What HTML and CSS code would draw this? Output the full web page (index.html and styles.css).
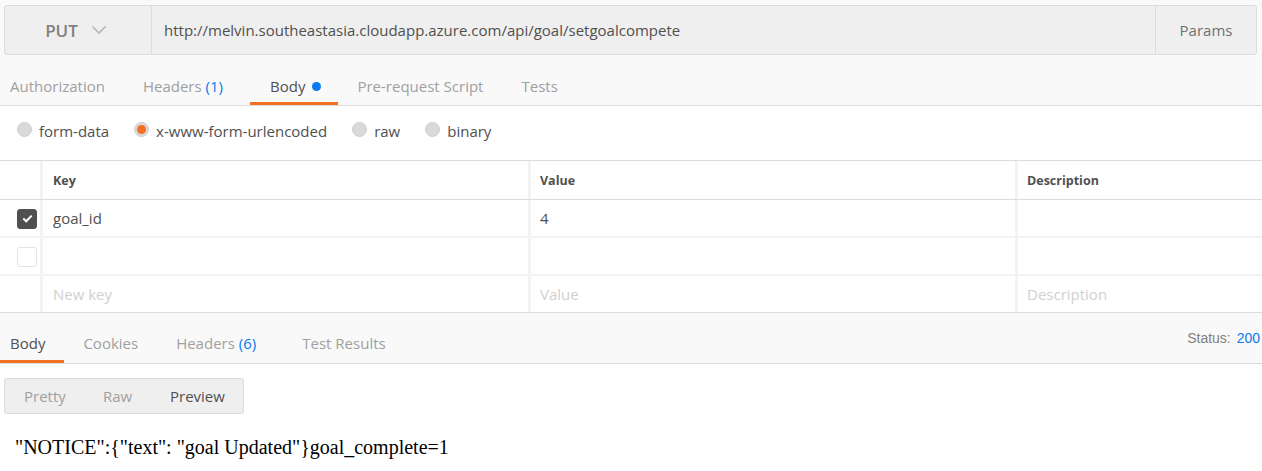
FILE: index.html
```html
<!DOCTYPE html>
<html>
<head>
<meta charset="utf-8">
<link rel="stylesheet" href="styles.css">
</head>
<body>
<div class="app">
  <div class="urlbar">
    <div class="method">
      <span class="method-name">PUT</span>
      <svg class="chev" width="16" height="10" viewBox="0 0 16 10"><path d="M1.5 1.5 L8 8 L14.5 1.5" fill="none" stroke="#b5b5b5" stroke-width="1.6"/></svg>
    </div>
    <div class="url">http://melvin.southeastasia.cloudapp.azure.com/api/goal/setgoalcompete</div>
    <div class="params">Params</div>
  </div>

  <div class="req-tabs">
    <div class="tab first">Authorization</div>
    <div class="tab">Headers <span class="count">(1)</span></div>
    <div class="tab active">Body <span class="dot"></span></div>
    <div class="tab">Pre-request Script</div>
    <div class="tab">Tests</div>
  </div>

  <div class="body-types">
    <div class="radio"><span class="circle"></span>form-data</div>
    <div class="radio"><span class="circle on"></span>x-www-form-urlencoded</div>
    <div class="radio"><span class="circle"></span>raw</div>
    <div class="radio"><span class="circle"></span>binary</div>
  </div>

  <div class="kv-table">
    <div class="kv-row kv-head">
      <div class="cell check"></div>
      <div class="cell col">Key</div>
      <div class="cell col">Value</div>
      <div class="cell col">Description</div>
    </div>
    <div class="kv-row">
      <div class="cell check"><span class="box checked"><svg width="11" height="9" viewBox="0 0 11 9"><path d="M1.3 4.6 L4.2 7.3 L9.7 1.6" fill="none" stroke="#fff" stroke-width="2"/></svg></span></div>
      <div class="cell col">goal_id</div>
      <div class="cell col">4</div>
      <div class="cell col"></div>
    </div>
    <div class="kv-row">
      <div class="cell check"><span class="box"></span></div>
      <div class="cell col"></div>
      <div class="cell col"></div>
      <div class="cell col"></div>
    </div>
    <div class="kv-row last">
      <div class="cell check"></div>
      <div class="cell col ph">New key</div>
      <div class="cell col ph">Value</div>
      <div class="cell col ph">Description</div>
    </div>
  </div>

  <div class="resp-bar">
    <div class="resp-tabs">
      <div class="rtab active">Body</div>
      <div class="rtab">Cookies</div>
      <div class="rtab">Headers <span class="count">(6)</span></div>
      <div class="rtab">Test Results</div>
    </div>
    <div class="status">Status: <span class="code">200</span></div>
  </div>

  <div class="resp-body">
    <div class="view-toggle">
      <span class="vt">Pretty</span>
      <span class="vt">Raw</span>
      <span class="vt on">Preview</span>
    </div>
    <div class="preview">"NOTICE":{"text": "goal Updated"}goal_complete=1</div>
  </div>
</div>
</body>
</html>
```

FILE: styles.css
```css
* { box-sizing: border-box; }
html, body { margin: 0; padding: 0; }
body {
  background: #ffffff;
  font-family: "Open Sans", "Noto Sans", sans-serif;
  color: #505050;
  width: 1262px;
  height: 471px;
  overflow: hidden;
}
.app { background: #f9f9f9; padding-top: 5px; }

.urlbar {
  display: flex;
  height: 50px;
  margin: 0 5px 0 4px;
  background: #efefef;
  border: 1px solid #dcdcdc;
  border-radius: 3px;
}
.method {
  width: 146px;
  display: flex;
  align-items: center;
  justify-content: center;
  gap: 13px;
  padding-right: 4px;
}
.method-name {
  font-size: 17px;
  font-weight: 600;
  color: #808080;
}
.url {
  flex: 1;
  display: flex;
  align-items: center;
  padding-left: 12px;
  border-left: 1px solid #dcdcdc;
  font-size: 15px;
  color: #505050;
}
.params {
  width: 101px;
  display: flex;
  align-items: center;
  justify-content: center;
  border-left: 1px solid #dcdcdc;
  font-size: 15px;
  color: #707070;
}

.req-tabs {
  display: flex;
  height: 51px;
  border-bottom: 1px solid #dcdcdc;
  align-items: stretch;
}
.tab {
  display: flex;
  align-items: center;
  padding: 14px 19px 0;
  font-size: 15px;
  color: #a0a0a0;
  border-bottom: 3px solid transparent;
}
.tab.first { padding-left: 10px; }
.tab.active { color: #505050; border-bottom-color: #f47023; padding-left: 20px; padding-right: 17px; }
.count { color: #097bed; margin-left: 4px; }
.tab .count { margin-right: 8px; }
.dot {
  width: 9px; height: 9px;
  border-radius: 50%;
  background: #097bed;
  margin-left: 7px;
  margin-top: 1px;
}

.body-types {
  display: flex;
  height: 54px;
  align-items: center;
  gap: 25px;
  padding: 0 0 4px 17px;
  background: #fff;
}
.radio {
  display: flex;
  align-items: center;
  font-size: 15px;
  color: #505050;
}
.circle {
  width: 15px; height: 15px;
  border-radius: 50%;
  background: #d9d9d9;
  border: 1px solid #cfcfcf;
  margin-right: 7px;
  margin-top: -3px;
  position: relative;
}
.circle.on::after {
  content: "";
  position: absolute;
  left: 2px; top: 2px;
  width: 9px; height: 9px;
  border-radius: 50%;
  background: #f47023;
}

.kv-table { background: #fff; border-top: 1px solid #dcdcdc; }
.kv-row {
  display: grid;
  grid-template-columns: 40px 488px 487px 1fr;
  height: 38px;
  border-bottom: 2px solid #f3f3f3;
}
.kv-row.kv-head { height: 39px; border-bottom: 1px solid #dcdcdc; }
.kv-row.last { height: 37px; border-bottom: 1px solid #dcdcdc; }
.cell {
  display: flex;
  align-items: center;
  font-size: 15px;
  color: #505050;
}
.cell.col { border-left: 3px solid #f3f3f3; padding-left: 9px; }
.kv-row .cell.col:nth-child(2) { padding-left: 10px; }
.kv-head .cell.col { font-size: 12.5px; font-weight: 700; color: #505050; }
.cell.ph { color: #d0d0d0; }
.cell.check { justify-content: flex-start; padding-left: 17px; }
.box {
  width: 20px; height: 20px;
  border-radius: 3px;
  border: 1px solid #e3e3e3;
  background: #fff;
  display: flex;
  align-items: center;
  justify-content: center;
  margin-top: 1px;
}
.box.checked { background: #505050; border-color: #505050; }

.resp-bar {
  display: flex;
  justify-content: space-between;
  height: 51px;
  border-bottom: 1px solid #dcdcdc;
  background: #f9f9f9;
}
.resp-tabs { display: flex; }
.rtab {
  display: flex;
  align-items: center;
  padding: 12px 19px 0;
  font-size: 15px;
  color: #a0a0a0;
  border-bottom: 3px solid transparent;
}
.rtab:first-child { padding-left: 10px; }
.rtab:nth-child(3) { padding-right: 27px; }
.rtab.active { color: #505050; border-bottom-color: #f47023; }
.status {
  font-family: "Liberation Sans", Arial, sans-serif;
  font-size: 14px;
  color: #808080;
  padding-top: 17px;
  padding-right: 2px;
}
.status .code { color: #097bed; margin-left: 2px; }

.resp-body { background: #fff; padding: 14px 0 0 4px; height: 108px; }
.view-toggle {
  display: inline-flex;
  align-items: center;
  height: 36px;
  width: 240px;
  background: #efefef;
  border: 1px solid #dcdcdc;
  border-radius: 3px;
  padding-left: 19px;
}
.vt { font-size: 15px; color: #a0a0a0; }
.vt:nth-child(1) { width: 79px; }
.vt:nth-child(2) { width: 67px; }
.vt.on { color: #505050; }
.preview {
  font-family: "Liberation Serif", "Times New Roman", serif;
  font-size: 20px;
  color: #000;
  padding: 22px 0 0 11px;
}
```
